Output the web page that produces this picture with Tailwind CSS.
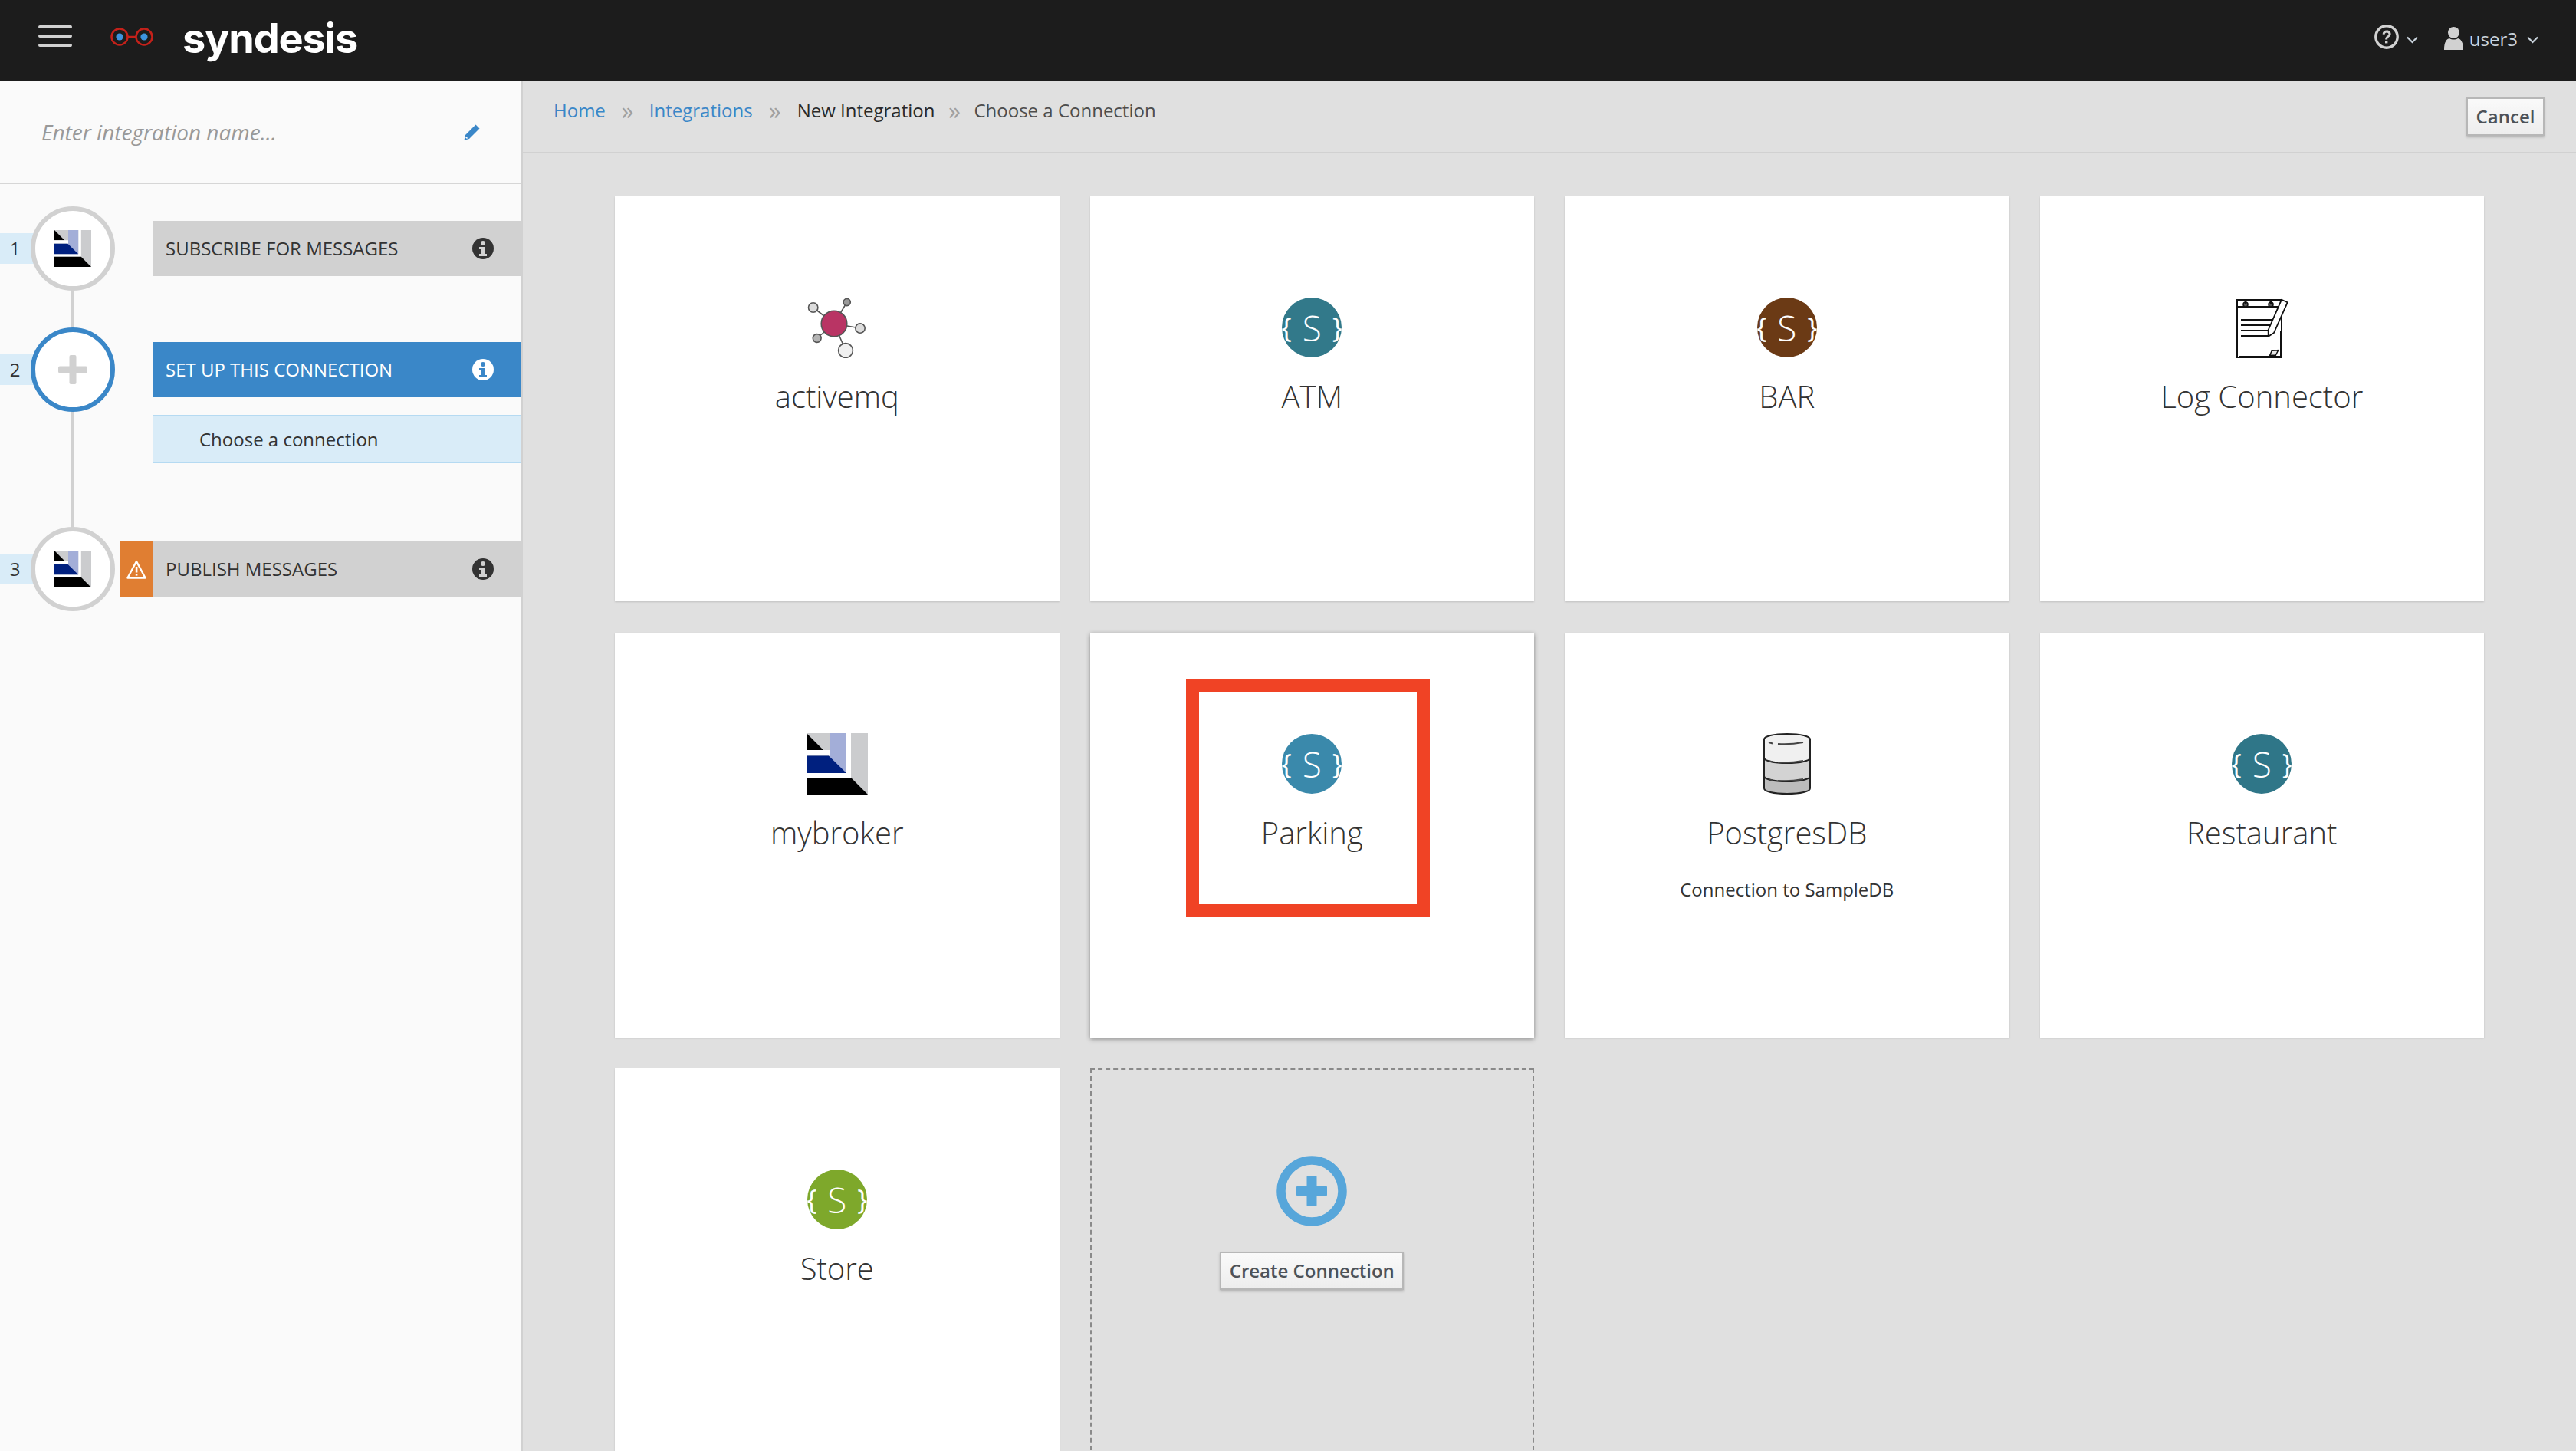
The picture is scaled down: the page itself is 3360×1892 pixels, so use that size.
<!DOCTYPE html>
<html lang="en">
<head>
  <meta charset="UTF-8" />
  <title>Syndesis - Choose a Connection</title>
  <script src="https://cdn.jsdelivr.net/npm/@tailwindcss/browser@4"></script>
</head>
<body class="bg-[#e0e0e0] font-['Open_Sans',sans-serif] text-[24px] text-[#333]">
  <div class="flex flex-col w-[3360px] h-[1892px] overflow-hidden">

    <!-- Top bar -->
    <header class="flex items-center h-[106px] shrink-0 bg-[#1c1c1c] relative">
      <div class="flex flex-col gap-[8px] ml-[50px] w-[44px] -mt-[12px]">
        <span class="block h-[4px] rounded-full bg-[#d1d1d1]"></span>
        <span class="block h-[4px] rounded-full bg-[#d1d1d1]"></span>
        <span class="block h-[4px] rounded-full bg-[#d1d1d1]"></span>
      </div>
      <svg class="ml-[50px] -mt-[10px]" width="56" height="26" viewBox="0 0 56 26">
        <circle cx="12" cy="13" r="10.5" fill="none" stroke="#c4211a" stroke-width="2.5"/>
        <circle cx="44" cy="13" r="10.5" fill="none" stroke="#c4211a" stroke-width="2.5"/>
        <path d="M22 13h12" stroke="#c4211a" stroke-width="2.5"/>
        <circle cx="12" cy="13" r="4.6" fill="#3d94e0"/>
        <circle cx="44" cy="13" r="4.6" fill="#3d94e0"/>
      </svg>
      <span class="ml-[38px] -mt-[6px] font-['Inter',sans-serif] font-bold text-[54px] leading-none tracking-[-1.2px] text-white">syndesis</span>

      <div class="ml-auto flex items-center text-[#d1d1d1] -mt-[10px]">
        <svg width="32" height="32" viewBox="0 0 32 32">
          <circle cx="16" cy="16" r="14.2" fill="none" stroke="#d1d1d1" stroke-width="3.4"/>
          <path d="M10.6 12.6c.3-3.2 2.6-5 5.6-5 3.1 0 5.4 1.9 5.4 4.7 0 4-4.4 3.9-4.4 7.2h-3c0-5 4.3-4.8 4.3-7.1 0-1.2-1-2-2.4-2-1.500 0-2.500.9-2.700 2.500z" fill="#d1d1d1"/>
          <rect x="14" y="21" width="3.4" height="3.4" fill="#d1d1d1"/>
        </svg>
        <svg class="ml-[10px] mt-[8px]" width="15" height="10" viewBox="0 0 15 10"><path d="M1 1.500l6.500 6.500L14 1.500" fill="none" stroke="#c9d3dc" stroke-width="2.2"/></svg>
        <svg class="ml-[34px] mt-[3px]" width="25" height="30" viewBox="0 0 25 30">
          <circle cx="12.500" cy="7.500" r="7.500" fill="#d1d1d1"/>
          <path d="M0 30c0-10 3-14 7-15 3 2 8 2 11 0 4 1 7 5 7 15z" fill="#d1d1d1"/>
        </svg>
        <span class="ml-[8px] mt-[6px] leading-none text-[#c9d3dc]">user3</span>
        <svg class="ml-[12px] mt-[8px] mr-[49px]" width="15" height="10" viewBox="0 0 15 10"><path d="M1 1.500l6.500 6.500L14 1.500" fill="none" stroke="#c9d3dc" stroke-width="2.2"/></svg>
      </div>
    </header>

    <div class="flex flex-1 min-h-0">

      <!-- Sidebar -->
      <aside class="w-[682px] shrink-0 bg-[#fafafa] border-r-2 border-[#d1d1d1] relative">
        <div class="flex items-center justify-between h-[134px] pl-[54px] pr-[54px] border-b-2 border-[#d6d6d6]">
          <span class="italic text-[#999] text-[28px]">Enter integration name...</span>
          <svg width="21" height="21" viewBox="0 0 21 21">
            <path d="M15.5 0.5l5 5L7 19l-6.5 1.800L2 14z" fill="#3a87c8"/>
            <path d="M2.5 16.5l2 2" stroke="#fff" stroke-width="1.6"/>
          </svg>
        </div>

        <!-- line joining the steps, behind the circles -->
        <div class="absolute left-[92px] top-[170px] h-[470px] w-[4px] bg-[#d1d1d1]"></div>

        <div class="relative mt-[29px] flex items-center h-[110px]">
          <span class="flex items-center justify-center w-[45px] h-[40px] bg-[#d9ecf8] pr-[6px]">1</span>
          <span class="flex items-center justify-center -ml-[5px] w-[110px] h-[110px] rounded-full bg-white border-[6px] border-[#d1d1d1] relative">
            <svg width="48" height="48" viewBox="0 0 80 80">
              <rect width="80" height="80" fill="#cbccce"/>
              <path d="M0 0l22 22H0z" fill="#000"/>
              <path d="M22 0h8v22H0v7h29l23 23H0v6h58V0h-6v52H30V0z" fill="#fff"/>
              <rect x="30" width="22" height="52" fill="#a3aed8"/>
              <path d="M0 29.5h29L52 52H0z" fill="#00207f"/>
              <path d="M0 58h58l22 22H0z" fill="#000"/>
            </svg>
          </span>
          <div class="flex items-center justify-between flex-1 ml-[50px] h-[72px] pl-[16px] pr-[36px] bg-[#d1d1d1]">
            <span>SUBSCRIBE FOR MESSAGES</span>
            <svg width="28" height="28" viewBox="0 0 28 28">
              <circle cx="14" cy="14" r="14" fill="#333"/>
              <circle cx="14" cy="7" r="3" fill="#d1d1d1"/>
              <path d="M9 12h7v9h3v3H9v-3h3v-6H9z" fill="#d1d1d1"/>
            </svg>
          </div>
        </div>

        <div class="relative mt-[48px] flex items-center h-[110px]">
          <span class="flex items-center justify-center w-[45px] h-[40px] bg-[#d9ecf8] pr-[6px]">2</span>
          <span class="flex items-center justify-center -ml-[5px] w-[110px] h-[110px] rounded-full bg-white border-[6px] border-[#3a87c8] relative">
            <svg width="38" height="38" viewBox="0 0 38 38"><path d="M14.5 2a2 2 0 0 1 2-2h5a2 2 0 0 1 2 2v12.5H36a2 2 0 0 1 2 2v5a2 2 0 0 1-2 2H23.5V36a2 2 0 0 1-2 2h-5a2 2 0 0 1-2-2V23.5H2a2 2 0 0 1-2-2v-5a2 2 0 0 1 2-2h12.5z" fill="#d1d1d1"/></svg>
          </span>
          <div class="flex items-center justify-between flex-1 ml-[50px] h-[72px] pl-[16px] pr-[36px] bg-[#3a87c8] text-white">
            <span>SET UP THIS CONNECTION</span>
            <svg width="28" height="28" viewBox="0 0 28 28">
              <circle cx="14" cy="14" r="14" fill="#fff"/>
              <circle cx="14" cy="7" r="3" fill="#3a87c8"/>
              <path d="M9 12h7v9h3v3H9v-3h3v-6H9z" fill="#3a87c8"/>
            </svg>
          </div>
        </div>

        <div class="relative mt-[4px] ml-[200px] flex items-center h-[63px] pl-[60px] bg-[#d9ecf8] border-y-2 border-[#b5daf2]">Choose a connection</div>

        <div class="relative mt-[83px] flex items-center h-[110px]">
          <span class="flex items-center justify-center w-[45px] h-[40px] bg-[#d9ecf8] pr-[6px]">3</span>
          <span class="flex items-center justify-center -ml-[5px] w-[110px] h-[110px] rounded-full bg-white border-[6px] border-[#d1d1d1] relative">
            <svg width="48" height="48" viewBox="0 0 80 80">
              <rect width="80" height="80" fill="#cbccce"/>
              <path d="M0 0l22 22H0z" fill="#000"/>
              <path d="M22 0h8v22H0v7h29l23 23H0v6h58V0h-6v52H30V0z" fill="#fff"/>
              <rect x="30" width="22" height="52" fill="#a3aed8"/>
              <path d="M0 29.5h29L52 52H0z" fill="#00207f"/>
              <path d="M0 58h58l22 22H0z" fill="#000"/>
            </svg>
          </span>
          <span class="flex items-center justify-center ml-[6px] w-[44px] h-[72px] bg-[#e07e32]">
            <svg width="26" height="25" viewBox="0 0 26 25">
              <path d="M13 2L24.500 23.500h-23z" fill="none" stroke="#fff" stroke-width="2.4" stroke-linejoin="round"/>
              <rect x="11.8" y="9" width="2.6" height="7.5" fill="#fff"/>
              <rect x="11.8" y="18" width="2.6" height="2.6" fill="#fff"/>
            </svg>
          </span>
          <div class="flex items-center justify-between flex-1 h-[72px] pl-[16px] pr-[36px] bg-[#d1d1d1]">
            <span>PUBLISH MESSAGES</span>
            <svg width="28" height="28" viewBox="0 0 28 28">
              <circle cx="14" cy="14" r="14" fill="#333"/>
              <circle cx="14" cy="7" r="3" fill="#d1d1d1"/>
              <path d="M9 12h7v9h3v3H9v-3h3v-6H9z" fill="#d1d1d1"/>
            </svg>
          </div>
        </div>
      </aside>

      <!-- Main content -->
      <main class="flex-1 min-w-0">
        <div class="flex justify-between h-[94px] pl-[40px] pr-[41px] border-b-2 border-[#d1d1d1]">
          <nav class="flex items-start pt-[20px]">
            <a href="#" class="text-[#3a87c8]">Home</a>
            <span class="w-[57px] text-center text-[#a0a0a0] text-[32px] leading-[36px]">»</span>
            <a href="#" class="text-[#3a87c8]">Integrations</a>
            <span class="w-[58px] text-center text-[#a0a0a0] text-[32px] leading-[36px]">»</span>
            <span class="text-[#292929]">New Integration</span>
            <span class="w-[51px] text-center text-[#a0a0a0] text-[32px] leading-[36px]">»</span>
            <span class="text-[#4d4d4d]">Choose a Connection</span>
          </nav>
          <button class="mt-[21px] w-[102px] h-[50px] border-2 border-[#b7b7b7] bg-gradient-to-b from-[#fafafa] to-[#ededed] font-semibold text-[#4d5258] shadow-[0_2px_3px_rgba(0,0,0,0.2)]">Cancel</button>
        </div>

        <div class="grid grid-cols-4 auto-rows-[528px] gap-x-[40px] gap-y-[40.5px] px-[120px] pt-[56px]">

          <div class="flex flex-col items-center pt-[131px] bg-white shadow-[0_1px_2px_rgba(0,0,0,0.15)]">
            <svg width="80" height="80" viewBox="0 0 80 80">
              <g stroke="#555" stroke-width="1.6">
                <path d="M36 35L8.700 14M36 35L52.700 7M36 35L70 41M36 35L13.700 54M36 35L51 70"/>
                <circle cx="8.7" cy="14" r="6.2" fill="#dcdcdc"/>
                <circle cx="52.7" cy="7" r="4.6" fill="#9a9a9a"/>
                <circle cx="70" cy="41" r="6.2" fill="#dcdcdc"/>
                <circle cx="13.7" cy="54" r="5.4" fill="#b4b4b4"/>
                <circle cx="51" cy="70" r="9.4" fill="#f0f0f0"/>
                <circle cx="36" cy="35" r="16.8" fill="#b93464"/>
              </g>
            </svg>
            <span class="mt-[22px] text-[40px] leading-[56px] font-light">activemq</span>
          </div>

          <div class="flex flex-col items-center pt-[132px] bg-white shadow-[0_1px_2px_rgba(0,0,0,0.15)]">
            <div class="flex items-center justify-between w-[78px] h-[78px] rounded-full overflow-hidden bg-[#32798a] text-white font-light">
              <span class="text-[36px] leading-none font-normal -ml-[1px]">{</span><span class="text-[46px] leading-none">S</span><span class="text-[36px] leading-none font-normal -mr-[1px]">}</span>
            </div>
            <span class="mt-[23px] text-[40px] leading-[56px] font-light">ATM</span>
          </div>

          <div class="flex flex-col items-center pt-[132px] bg-white shadow-[0_1px_2px_rgba(0,0,0,0.15)]">
            <div class="flex items-center justify-between w-[78px] h-[78px] rounded-full overflow-hidden bg-[#6b3a15] text-white font-light">
              <span class="text-[36px] leading-none font-normal -ml-[1px]">{</span><span class="text-[46px] leading-none">S</span><span class="text-[36px] leading-none font-normal -mr-[1px]">}</span>
            </div>
            <span class="mt-[23px] text-[40px] leading-[56px] font-light">BAR</span>
          </div>

          <div class="flex flex-col items-center pt-[131px] bg-white shadow-[0_1px_2px_rgba(0,0,0,0.15)]">
            <svg width="80" height="80" viewBox="0 0 80 80" fill="none" stroke="#111">
              <path d="M8 4h58v76H8z" stroke-width="2"/>
              <path d="M8 13h58" stroke-width="2"/>
              <path d="M10 78h56" stroke-width="2"/>
              <path d="M65.5 44v35" stroke-width="3"/>
              <circle cx="19" cy="10" r="3" fill="#555" stroke-width="1.5"/>
              <circle cx="52" cy="10" r="3" fill="#555" stroke-width="1.5"/>
              <path d="M19 10V3M52 10V3" stroke-width="2.4"/>
              <path d="M13 30h40M13 37h38M13 44h35M13 51h35" stroke-width="2"/>
              <path d="M48.7 43L66 3.700l7.700 3.600L56 47l-7.300 4.700z" fill="#fff" stroke-width="1.8" stroke-linejoin="round"/>
              <path d="M53.3 70.300l8.400-.6-3.400 6.600h-7.600z" fill="#e8e8e8" stroke-width="1.5"/>
            </svg>
            <span class="mt-[22px] text-[40px] leading-[56px] font-light">Log Connector</span>
          </div>

          <div class="flex flex-col items-center pt-[131px] bg-white shadow-[0_1px_2px_rgba(0,0,0,0.15)]">
            <svg width="80" height="80" viewBox="0 0 80 80">
              <rect width="80" height="80" fill="#cbccce"/>
              <path d="M0 0l22 22H0z" fill="#000"/>
              <path d="M22 0h8v22H0v7h29l23 23H0v6h58V0h-6v52H30V0z" fill="#fff"/>
              <rect x="30" width="22" height="52" fill="#a3aed8"/>
              <path d="M0 29.5h29L52 52H0z" fill="#00207f"/>
              <path d="M0 58h58l22 22H0z" fill="#000"/>
            </svg>
            <span class="mt-[22px] text-[40px] leading-[56px] font-light">mybroker</span>
          </div>

          <div class="relative flex flex-col items-center pt-[132px] bg-white shadow-[0_2px_6px_rgba(0,0,0,0.4)]">
            <div class="flex items-center justify-between w-[78px] h-[78px] rounded-full overflow-hidden bg-[#3a89ab] text-white font-light">
              <span class="text-[36px] leading-none font-normal -ml-[1px]">{</span><span class="text-[46px] leading-none">S</span><span class="text-[36px] leading-none font-normal -mr-[1px]">}</span>
            </div>
            <span class="mt-[23px] text-[40px] leading-[56px] font-light">Parking</span>
            <!-- red highlight drawn over the card -->
            <div class="absolute left-[125px] top-[60px] w-[318px] h-[311px] border-[17px] border-[#f04325]"></div>
          </div>

          <div class="flex flex-col items-center pt-[131px] bg-white shadow-[0_1px_2px_rgba(0,0,0,0.15)]">
            <svg width="80" height="80" viewBox="0 0 80 80" stroke="#222" stroke-width="2">
              <path d="M10 56v16c0 4 12 7 30 7s30-3 30-7V56z" fill="#bcbcbc"/>
              <path d="M10 32v24c0 4 12 7 30 7s30-3 30-7V32z" fill="#d3d3d3"/>
              <path d="M10 8v24c0 4 12 7 30 7s30-3 30-7V8C70 4 58 1 40 1S10 4 10 8z" fill="#f0f0f0"/>
              <path d="M28 14c12 1 22 0 33-2M16 12l5 1.500M28 38c12 1 22 0 33-2M16 36l5 1.500M28 62c12 1 22 0 33-2M16 60l5 1.500" fill="none" stroke="#444"/>
            </svg>
            <span class="mt-[22px] text-[40px] leading-[56px] font-light">PostgresDB</span>
            <span class="mt-[30px] text-[24px] leading-[32px]">Connection to SampleDB</span>
          </div>

          <div class="flex flex-col items-center pt-[132px] bg-white shadow-[0_1px_2px_rgba(0,0,0,0.15)]">
            <div class="flex items-center justify-between w-[78px] h-[78px] rounded-full overflow-hidden bg-[#2f7688] text-white font-light">
              <span class="text-[36px] leading-none font-normal -ml-[1px]">{</span><span class="text-[46px] leading-none">S</span><span class="text-[36px] leading-none font-normal -mr-[1px]">}</span>
            </div>
            <span class="mt-[23px] text-[40px] leading-[56px] font-light">Restaurant</span>
          </div>

          <div class="flex flex-col items-center pt-[132px] bg-white shadow-[0_1px_2px_rgba(0,0,0,0.15)]">
            <div class="flex items-center justify-between w-[78px] h-[78px] rounded-full overflow-hidden bg-[#7ea82b] text-white font-light">
              <span class="text-[36px] leading-none font-normal -ml-[1px]">{</span><span class="text-[46px] leading-none">S</span><span class="text-[36px] leading-none font-normal -mr-[1px]">}</span>
            </div>
            <span class="mt-[23px] text-[40px] leading-[56px] font-light">Store</span>
          </div>

          <div class="flex flex-col items-center pt-[112px] border-2 border-dashed border-[#8a8a8a]">
            <svg width="92" height="92" viewBox="0 0 92 92">
              <circle cx="46" cy="46" r="40" fill="none" stroke="#57a6da" stroke-width="11.5"/>
              <path d="M39.5 27.5a1.500 1.500 0 0 1 1.500-1.500h10a1.500 1.500 0 0 1 1.500 1.500v12h12a1.500 1.500 0 0 1 1.500 1.500v10a1.500 1.500 0 0 1-1.500 1.500h-12v12a1.500 1.500 0 0 1-1.500 1.500H41a1.500 1.500 0 0 1-1.500-1.500v-12h-12a1.500 1.500 0 0 1-1.500-1.500V41a1.500 1.500 0 0 1 1.500-1.500h12z" fill="#57a6da"/>
            </svg>
            <button class="mt-[33px] w-[240px] h-[50px] border-2 border-[#b7b7b7] bg-gradient-to-b from-[#fafafa] to-[#ededed] font-semibold text-[#4d5258] shadow-[0_2px_3px_rgba(0,0,0,0.2)]">Create Connection</button>
          </div>
        </div>
      </main>
    </div>
  </div>
</body>
</html>
